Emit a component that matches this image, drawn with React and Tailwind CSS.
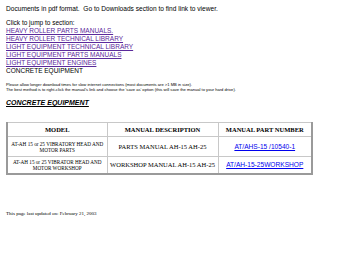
import React from "react";

const jumpLinks = [
  "HEAVY ROLLER PARTS MANUALS.",
  "HEAVY ROLLER TECHNICAL LIBRARY",
  "LIGHT EQUIPMENT TECHNICAL LIBRARY",
  "LIGHT EQUIPMENT PARTS MANUALS",
  "LIGHT EQUIPMENT ENGINES",
];

const rows = [
  {
    model: ["AT-AH 15 or 25 VIBRATORY HEAD AND", "MOTOR PARTS"],
    desc: "PARTS MANUAL AH-15 AH-25",
    part: "AT/AHS-15 /10540-1",
    h: "h-[20px]",
  },
  {
    model: ["AT-AH 15 or 25 VIBRATOR HEAD AND", "MOTOR WORKSHOP"],
    desc: "WORKSHOP MANUAL AH-15 AH-25",
    part: "AT/AH-15-25WORKSHOP",
    h: "h-[17px]",
  },
];

const App = () => {
  return (
    <div className="w-[350px] h-[265px] overflow-hidden bg-white px-[6px] text-black font-['Liberation_Sans',Arial,sans-serif]">
      <p className="pt-[5px] text-[6.6px] leading-[8px]">
        Documents in pdf format.&nbsp; Go to Downloads section to find link to viewer.
      </p>

      <p className="mt-[6px] text-[6.5px] leading-[8px]">Click to jump to section:</p>
      <div className="flex flex-col text-[6.5px] leading-[8px]">
        {jumpLinks.map((l) => (
          <a key={l} href="#" className="text-[#5b2a9b] underline self-start">
            {l}
          </a>
        ))}
        <span>CONCRETE EQUIPMENT</span>
      </div>

      <div className="mt-[7px] text-[4.1px] leading-[5px]">
        <p>Please allow longer download times for slow internet connections (most documents are &gt;1 MB in size).</p>
        <p>The best method is to right-click the manual's link and choose the 'save as' option (this will save the manual to your hard drive).</p>
      </div>

      <h3 className="mt-[6px] text-[7px] leading-[9px] font-bold italic underline">CONCRETE EQUIPMENT</h3>

      <table className="mt-[15px] w-[305px] table-fixed border-collapse border-2 border-t border-[#9a9a9a] border-t-[#b0b0b0] font-['Liberation_Serif','Times_New_Roman',serif]">
        <colgroup>
          <col className="w-[100px]" />
          <col className="w-[111px]" />
          <col className="w-[94px]" />
        </colgroup>
        <thead>
          <tr className="h-[14px] text-[6.5px] leading-[8px] font-bold">
            <th className="border border-[#c8c8c8]">MODEL</th>
            <th className="border border-[#c8c8c8]">MANUAL DESCRIPTION</th>
            <th className="border border-[#c8c8c8]">MANUAL PART NUMBER</th>
          </tr>
        </thead>
        <tbody>
          {rows.map((r) => (
            <tr key={r.part} className={r.h}>
              <td className="border border-[#c8c8c8] text-center text-[5.2px] leading-[6px] p-0">
                {r.model[0]}
                <br />
                {r.model[1]}
              </td>
              <td className="border border-[#c8c8c8] text-center text-[6.5px] leading-[8px] p-0 whitespace-nowrap">
                {r.desc}
              </td>
              <td className="border border-[#c8c8c8] text-center text-[6.6px] leading-[8px] p-0 font-['Liberation_Sans',Arial,sans-serif]">
                <a href="#" className="text-[#0000ee] underline">
                  {r.part}
                </a>
              </td>
            </tr>
          ))}
        </tbody>
      </table>

      <p className="mt-[36px] text-[5px] leading-[6px] font-['Liberation_Serif','Times_New_Roman',serif]">
        This page last updated on: February 21, 2003
      </p>
    </div>
  );
};

export default App;
